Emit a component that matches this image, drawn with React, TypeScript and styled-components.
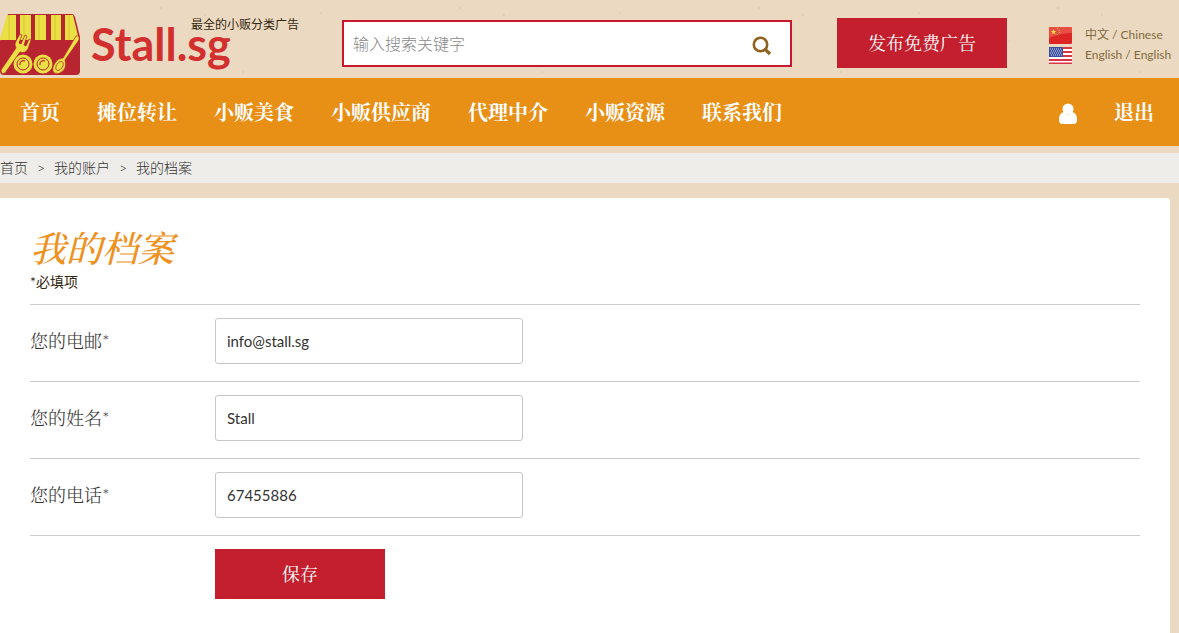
import React, { useState } from "react";
import styled, { createGlobalStyle } from "styled-components";

const sans = `Lato, "Noto Sans CJK SC", sans-serif`;
const serif = `"Liberation Serif", "Noto Serif CJK SC", "Noto Sans CJK SC", serif`;

const GlobalStyle = createGlobalStyle`
  * { box-sizing: border-box; }
  body {
    margin: 0;
    min-height: 100vh;
    font-family: ${sans};
    font-size: 14px;
    color: #33270f;
    background-color: #ecd9c1;
    background-image:
      radial-gradient(circle at 22px 13px, #e0ccb2 0, transparent 2px),
      radial-gradient(circle at 161px 8px, #dcc8ad 0, transparent 2px),
      radial-gradient(circle at 205px 15px, #e0ccb2 0, transparent 2px),
      radial-gradient(circle at 112px 41px, #e2cfb6 0, transparent 2px),
      radial-gradient(circle at 243px 72px, #e0ccb2 0, transparent 2px);
    background-size: 299px 97px;
  }
  a { color: inherit; text-decoration: none; }
`;

const Header = styled.header`
  display: grid;
  grid-template-columns: 342px minmax(200px, 1fr) 170px 163px;
  align-items: start;
  height: 78px;
  padding-right: 9px;
`;

const Brand = styled.a`
  position: relative;
  display: flex;
  gap: 11px;
  padding-top: 14px;
`;

const BrandName = styled.span`
  font-size: 45px;
  line-height: 60px;
  font-weight: 700;
  color: #d2302f;
`;

const Tagline = styled.span`
  position: absolute;
  left: 191px;
  top: 16px;
  font-size: 12px;
  line-height: 18px;
  white-space: nowrap;
`;

const SearchForm = styled.form`
  display: flex;
  align-items: center;
  height: 47px;
  margin-top: 20px;
  margin-right: 45px;
  border: 2px solid #c8182f;
  background: #fff;
`;

const SearchInput = styled.input`
  flex: 1;
  min-width: 0;
  height: 100%;
  padding: 0 9px;
  border: 0;
  outline: 0;
  background: transparent;
  font-family: ${sans};
  font-size: 16px;
  font-weight: 300;
  &::placeholder { color: #888; opacity: 1; }
`;

const IconButton = styled.button`
  display: flex;
  margin: 4px 18px 0 0;
  padding: 0;
  border: 0;
  background: none;
`;

const RedButton = styled.button<{ $top?: number }>`
  width: 170px;
  height: 50px;
  margin-top: ${(p) => p.$top ?? 0}px;
  padding: 2px 0 0;
  border: 0;
  background: #c31f2e;
  color: #fff;
  font-family: ${serif};
  font-size: 18px;
  line-height: 26px;
`;

const Languages = styled.div`
  display: flex;
  flex-direction: column;
  padding: 25px 0 0 42px;
`;

const Language = styled.a`
  display: flex;
  align-items: center;
  gap: 13px;
  height: 20px;
  font-size: 12px;
  line-height: 20px;
  white-space: nowrap;
  color: #806b40;
  svg { flex: none; }
`;

const Nav = styled.nav`
  display: flex;
  align-items: center;
  gap: 37px;
  height: 68px;
  padding: 2px 25px 0 20px;
  background: #e89016;
  color: #fff;
  font-family: ${serif};
  font-size: 20px;
  line-height: 30px;
  font-weight: 700;
  white-space: nowrap;
`;

const AccountLink = styled.a`
  display: flex;
  margin-left: auto;
`;

const Breadcrumb = styled.nav`
  display: flex;
  align-items: center;
  height: 30px;
  margin-top: 7px;
  background: #efedea;
  color: #333;
  font-weight: 300;
  line-height: 20px;
`;

const Separator = styled.span`
  width: 26px;
  text-align: center;
  font-size: 14px;
`;

const Panel = styled.main`
  min-height: calc(100vh - 198px);
  margin: 15px 9px 0 0;
  padding: 30px 30px 34px;
  border-top-right-radius: 3px;
  background: #fff;
`;

const Title = styled.h1`
  margin: 0;
  color: #ee921f;
  font-family: ${serif};
  font-size: 36px;
  line-height: 44px;
  font-style: italic;
  font-weight: 500;
`;

const Note = styled.p`
  margin: 0 0 12px;
  line-height: 20px;
`;

const Row = styled.div`
  display: flex;
  align-items: flex-start;
  padding: 13px 0 17px;
  border-top: 1px solid #ccc;
`;

const Label = styled.label`
  width: 185px;
  line-height: 46px;
  font-family: Lato, "Noto Serif CJK SC", "Noto Sans CJK SC", serif;
  font-size: 18px;
  font-weight: 300;
  color: #333;
`;

const Field = styled.input`
  width: 308px;
  height: 46px;
  padding: 0 11px;
  border: 1px solid #c6c6c6;
  border-radius: 3px;
  background: #fff;
  color: #333;
  font-family: ${sans};
  font-size: 15px;
`;

const Actions = styled.div`
  padding: 13px 0 0 185px;
  border-top: 1px solid #ccc;
`;

const Plate = ({ cx }: { cx: number }) => (
  <g fill="none" stroke="#b82430">
    <circle cx={cx} cy="50" r="9.5" fill="#eadf45" stroke="none" />
    <circle cx={cx} cy="50" r="6" strokeWidth="1" />
    <path d={`M${cx - 3} 51a3.5 3.5 0 0 1 5-4`} strokeWidth="1.2" />
  </g>
);

const StallLogo = () => (
  <svg width="80" height="62" viewBox="0 0 80 62" aria-hidden="true">
    <path d="M8 0h64q2 0 3 3l5 20v34q0 4-4 4H4q-4 0-4-4V27Z" fill="#b82430" />
    <path d="M7 1h9v25H0v-1Z" fill="#eadf45" />
    <path d="M20 1h11v25H20ZM35 1h11v25H35ZM51 1h10v25H51ZM65 1h8l6 25H65Z" fill="#eadf45" />
    <path d="M24 1v25M39 1v25M55 1v25M69 1v25M9 1v25" stroke="#d8b52f" strokeWidth="1" opacity=".6" />
    <Plate cx={23} />
    <Plate cx={43} />
    <g stroke="#b82430" strokeWidth=".7" fill="#eadf45">
      <path d="M1 56 16 34q-2-4 0-7l4-7 2 1-3 8 2 1 4-9 2 1-3 9 2 1 3-7 2 1-3 9q-3 5-8 3L5 59q-4 2-4-3Z" />
      <path d="M76 22q4-1 3 4L65 46q2 7-2 11-4 4-9 2-3-4 1-10 3-5 8-5Z" />
      <ellipse cx="59.500" cy="52" rx="3" ry="5" transform="rotate(35 59.500 52)" />
    </g>
  </svg>
);

const ChinaFlag = () => (
  <svg width="23" height="17" viewBox="0 0 23 17" aria-hidden="true">
    <rect width="23" height="17" rx="1" fill="#dd2525" />
    <path d="M0 0h23v6Q12 6 0 11Z" fill="#f06a55" opacity=".6" />
    <path d="m4.500 2 .8 1.900 2 .1-1.600 1.300.6 2-1.800-1.100-1.800 1.100.6-2L1.700 4l2-.1Z" fill="#f7d94a" />
    <path d="M8 1h1v1H8ZM10 3h1v1h-1ZM10 5h1v1h-1ZM8 7h1v1H8Z" fill="#f7d94a" />
  </svg>
);

const UsFlag = () => (
  <svg width="23" height="17" viewBox="0 0 23 17" aria-hidden="true">
    <rect width="23" height="17" fill="#fff" />
    <path d="M0 1h23M0 5h23M0 9h23M0 13h23M0 16.500h23" stroke="#dc3444" strokeWidth="2" />
    <rect width="14" height="10" fill="#3d4f9f" />
    <path d="M1 2h12M2 4h12M1 6h12M2 8h12" stroke="#d7dcf2" strokeWidth="1" strokeDasharray="1 1" />
  </svg>
);

const SearchIcon = () => (
  <svg width="20" height="20" viewBox="0 0 20 20" fill="none" stroke="#8f621d" aria-hidden="true">
    <circle cx="8.500" cy="8.500" r="6.700" strokeWidth="2.600" />
    <path d="m13.300 13.300 4.700 4.700" strokeWidth="3.200" />
  </svg>
);

const UserIcon = () => (
  <svg width="18" height="21" viewBox="0 0 18 21" fill="#fff" aria-hidden="true">
    <circle cx="9" cy="6" r="5.500" />
    <path d="M4.500 9Q0 10 0 17q0 4 3.500 4h11q3.500 0 3.500-4 0-7-4.500-8Q9 14 4.500 9Z" />
  </svg>
);

const navItems = ["首页", "摊位转让", "小贩美食", "小贩供应商", "代理中介", "小贩资源", "联系我们"];

const fields = [
  { id: "email", label: "您的电邮", type: "email", value: "info@stall.sg" },
  { id: "name", label: "您的姓名", type: "text", value: "Stall" },
  { id: "phone", label: "您的电话", type: "tel", value: "67455886" },
];

export default function App() {
  const [query, setQuery] = useState("");
  return (
    <>
      <GlobalStyle />
      <Header>
        <Brand href="#">
          <StallLogo />
          <BrandName>Stall.sg</BrandName>
          <Tagline>最全的小贩分类广告</Tagline>
        </Brand>
        <SearchForm role="search" onSubmit={(e) => e.preventDefault()}>
          <SearchInput
            type="text"
            aria-label="输入搜索关键字"
            placeholder="输入搜索关键字"
            value={query}
            onChange={(e) => setQuery(e.target.value)}
          />
          <IconButton type="submit" aria-label="搜索">
            <SearchIcon />
          </IconButton>
        </SearchForm>
        <RedButton type="button" $top={18}>发布免费广告</RedButton>
        <Languages>
          <Language href="#"><ChinaFlag />中文 / Chinese</Language>
          <Language href="#"><UsFlag />English / English</Language>
        </Languages>
      </Header>
      <Nav>
        {navItems.map((item) => (
          <a href="#" key={item}>{item}</a>
        ))}
        <AccountLink href="#" aria-label="我的账户"><UserIcon /></AccountLink>
        <a href="#">退出</a>
      </Nav>
      <Breadcrumb>
        <a href="#">首页</a>
        <Separator>&gt;</Separator>
        <a href="#">我的账户</a>
        <Separator>&gt;</Separator>
        <span>我的档案</span>
      </Breadcrumb>
      <Panel>
        <Title>我的档案</Title>
        <Note>*必填项</Note>
        <form onSubmit={(e) => e.preventDefault()}>
          {fields.map((f) => (
            <Row key={f.id}>
              <Label htmlFor={f.id}>{f.label}*</Label>
              <Field id={f.id} type={f.type} defaultValue={f.value} />
            </Row>
          ))}
          <Actions>
            <RedButton type="submit">保存</RedButton>
          </Actions>
        </form>
      </Panel>
    </>
  );
}
